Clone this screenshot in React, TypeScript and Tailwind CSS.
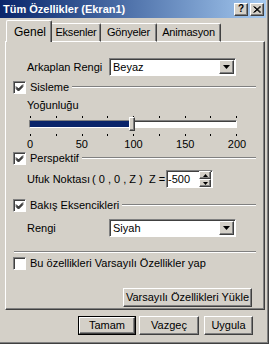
import React from "react";

const raised =
  "border border-t-white border-l-white border-r-[#404040] border-b-[#404040] shadow-[inset_-1px_-1px_0_#808080] bg-[#d4d0c8]";
const sunken =
  "border border-t-[#808080] border-l-[#808080] border-r-white border-b-white shadow-[inset_1px_1px_0_#404040]";

function Check({ checked }: { checked: boolean }) {
  return (
    <div className={`w-[13px] h-[13px] bg-white shrink-0 ${sunken} flex items-center justify-center`}>
      {checked && (
        <svg width="9" height="9" viewBox="0 0 9 9">
          <path d="M1 3.5 L3.5 6 L8 1.5 M1 4.5 L3.5 7 L8 2.5 M1 5.5 L3.5 8 L8 3.5" stroke="#000" strokeWidth="1" fill="none" />
        </svg>
      )}
    </div>
  );
}

function Combo({ value }: { value: string }) {
  return (
    <div className={`w-[127px] h-[18px] bg-white flex items-center ${sunken}`}>
      <span className="flex-1 pl-[3px] leading-none">{value}</span>
      <div className={`w-[15px] h-[14px] mr-[1px] flex items-center justify-center ${raised}`}>
        <svg width="7" height="4" viewBox="0 0 7 4">
          <path d="M0 0 H7 L3.5 4 Z" fill="#000" />
        </svg>
      </div>
    </div>
  );
}

function GroupHead({ label }: { label: string }) {
  return (
    <div className="flex items-center h-[14px] pl-[7px] pr-[8px]">
      <Check checked />
      <span className="ml-[4px] leading-none whitespace-nowrap">{label}</span>
      <div className="flex-1 ml-[3px] h-[2px] border-t border-t-[#808080] border-b border-b-white" />
    </div>
  );
}

function Ticks() {
  return (
    <div className="flex justify-between w-[207px] h-[2px]">
      {Array.from({ length: 9 }).map((_, i) => (
        <div key={i} className="w-[1px] h-[2px] bg-black" />
      ))}
    </div>
  );
}

const tabOther =
  "h-[19px] border-t border-r border-t-white border-r-[#404040] shadow-[inset_-1px_0_0_#808080] rounded-tr-[2px] flex items-center justify-center border-b border-b-white whitespace-nowrap tracking-[-0.2px]";

export default function App() {
  return (
    <div className="w-[269px] h-[344px] bg-[#d4d0c8] overflow-hidden font-['Liberation_Sans',Arial,sans-serif] text-[11px] text-black border-r border-b border-r-[#404040] border-b-[#404040]">
      <div className="w-full h-full border-r border-b border-r-[#808080] border-b-[#808080] flex flex-col">
        {/* Title bar */}
        <div className="h-[18px] mr-[1px] bg-gradient-to-r from-[#0a246a] to-[#a6caf0] flex items-center pl-[3px] pr-[2px]">
          <span className="text-white font-bold leading-none flex-1">Tüm Özellikler (Ekran1)</span>
          <div className={`w-[14px] h-[13px] flex items-center justify-center font-bold text-[10px] leading-none ${raised}`}>?</div>
          <div className={`w-[14px] h-[13px] ml-[2px] flex items-center justify-center ${raised}`}>
            <svg width="8" height="7" viewBox="0 0 8 7">
              <path d="M0.5 0.5 L7 6.5 M1.5 0.5 L8 6.5 M7 0.5 L0.5 6.5 M8 0.5 L1.5 6.5" stroke="#000" strokeWidth="1" />
            </svg>
          </div>
        </div>

        {/* Tabs */}
        <div className="flex items-end h-[22px] mt-[2px] pl-[6px] relative z-10 -mb-[1px]">
          <div className="w-[46px] h-[22px] border-t border-l border-r border-t-white border-l-white border-r-[#404040] shadow-[inset_-1px_0_0_#808080] rounded-t-[2px] bg-[#d4d0c8] flex items-center pl-[7px] text-[12px]">
            Genel
          </div>
          <div className={`w-[49px] ${tabOther}`}>Eksenler</div>
          <div className={`w-[56px] ${tabOther}`}>Gönyeler</div>
          <div className={`w-[64px] ${tabOther}`}>Animasyon</div>
        </div>

        {/* Panel */}
        <div className="ml-[5px] w-[260px] h-[269px] border border-t-white border-l-white border-r-[#404040] border-b-[#404040] shadow-[inset_-1px_-1px_0_#808080] flex flex-col">
          <div className="flex items-center mt-[16px] h-[18px]">
            <span className="ml-[21px] w-[82px] leading-none">Arkaplan Rengi</span>
            <Combo value="Beyaz" />
          </div>

          <div className="mt-[4px]">
            <GroupHead label="Sisleme" />
          </div>

          <div className="mt-[5px] ml-[21px] h-[13px] leading-[13px]">Yoğunluğu</div>

          {/* Slider */}
          <div className="mt-[4px] ml-[23px] flex flex-col w-[209px]">
            <div className="pl-[1px]"><Ticks /></div>
            <div className={`mt-[2px] h-[8px] w-[208px] bg-white relative ${sunken}`}>
              <div className="h-full w-[100px] bg-[#0a246a]" />
              <div className={`absolute left-[99px] -top-[4px] w-[6px] h-[14px] ${raised}`} />
            </div>
            <div className="mt-[6px] pl-[1px]"><Ticks /></div>
            <div className="flex justify-between w-[207px] ml-[1px] mt-[2px] h-[12px]">
              {["0", "50", "100", "150", "200"].map((t) => (
                <div key={t} className="w-0 flex justify-center leading-[12px] whitespace-nowrap">{t}</div>
              ))}
            </div>
          </div>

          <div className="mt-[1px]">
            <GroupHead label="Perspektif" />
          </div>

          <div className="flex items-center mt-[5px] h-[18px] whitespace-nowrap">
            <span className="ml-[21px] w-[65px] shrink-0 leading-none">Ufuk Noktası</span>
            <span className="w-[57px] shrink-0 leading-none">(&nbsp;0&nbsp;,&nbsp;0&nbsp;,&nbsp;Z&nbsp;)</span>
            <span className="w-[17px] shrink-0 leading-none">Z =</span>
            <div className={`w-[47px] shrink-0 h-[18px] bg-white flex items-center ${sunken}`}>
              <span className="flex-1 pl-[1px] leading-none">-500</span>
              <div className="flex flex-col mr-[1px]">
                <div className={`w-[12px] h-[8px] flex items-center justify-center ${raised}`}>
                  <svg width="5" height="3" viewBox="0 0 5 3"><path d="M0 3 H5 L2.5 0 Z" fill="#000" /></svg>
                </div>
                <div className={`w-[12px] h-[8px] flex items-center justify-center ${raised}`}>
                  <svg width="5" height="3" viewBox="0 0 5 3"><path d="M0 0 H5 L2.5 3 Z" fill="#000" /></svg>
                </div>
              </div>
            </div>
          </div>

          <div className="mt-[10px]">
            <GroupHead label="Bakış Eksencikleri" />
          </div>

          <div className="flex items-center mt-[7px] h-[18px]">
            <span className="ml-[21px] w-[82px] leading-none">Rengi</span>
            <Combo value="Siyah" />
          </div>

          <div className="mt-[14px] mx-[8px] h-[2px] border-t border-t-[#808080] border-b border-b-white" />

          <div className="flex items-center mt-[3px] h-[14px] pl-[7px]">
            <Check checked={false} />
            <span className="ml-[4px] leading-none">Bu özellikleri Varsayılı Özellikler yap</span>
          </div>

          <div className="flex justify-end mt-[18px] pr-[12px]">
            <div className={`w-[129px] h-[19px] flex items-center justify-center leading-none whitespace-nowrap ${raised}`}>
              Varsayılı Özellikleri Yükle
            </div>
          </div>
        </div>

        {/* Bottom buttons */}
        <div className="flex mt-[6px] pl-[78px]">
          <div className="w-[58px] h-[19px] border border-black">
            <div className={`w-full h-full flex items-center justify-center leading-none ${raised}`}>Tamam</div>
          </div>
          <div className={`ml-[3px] w-[60px] h-[19px] flex items-center justify-center leading-none ${raised}`}>Vazgeç</div>
          <div className={`ml-[5px] w-[49px] h-[19px] flex items-center justify-center leading-none ${raised}`}>Uygula</div>
        </div>
      </div>
    </div>
  );
}
